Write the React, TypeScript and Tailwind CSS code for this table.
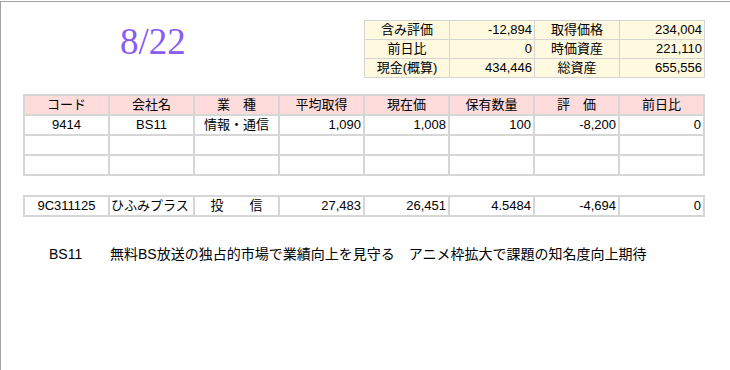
const font = '[font-family:"Liberation_Sans","Noto_Sans_CJK_JP",sans-serif]';

const summary = [
  ['含み評価', '-12,894', '取得価格', '234,004'],
  ['前日比', '0', '時価資産', '221,110'],
  ['現金(概算)', '434,446', '総資産', '655,556'],
];

const headers = ['コード', '会社名', '業　種', '平均取得', '現在価', '保有数量', '評　価', '前日比'];

type Cell = { t: string; a?: 'c' | 'r' | 'l' };

const rows: Cell[][] = [
  [
    { t: '9414', a: 'c' },
    { t: 'BS11', a: 'c' },
    { t: '情報・通信', a: 'c' },
    { t: '1,090' },
    { t: '1,008' },
    { t: '100' },
    { t: '-8,200' },
    { t: '0' },
  ],
  Array.from({ length: 8 }, () => ({ t: '' })),
  Array.from({ length: 8 }, () => ({ t: '' })),
];

const fund: Cell[] = [
  { t: '9C311125', a: 'c' },
  { t: 'ひふみプラス', a: 'l' },
  { t: '投　　信', a: 'c' },
  { t: '27,483' },
  { t: '26,451' },
  { t: '4.5484' },
  { t: '-4,694' },
  { t: '0' },
];

const align = (a?: string) =>
  a === 'c' ? 'justify-center' : a === 'l' ? 'justify-start pl-[1px]' : 'justify-end pr-[2px]';

function DataRow({ cells }: { cells: Cell[] }) {
  return (
    <>
      {cells.map((c, i) => (
        <div key={i} className={`h-[18px] bg-white flex items-center text-[13px] text-black ${align(c.a)}`}>
          {c.t}
        </div>
      ))}
    </>
  );
}

export default function App() {
  return (
    <div className={`w-[730px] h-[370px] bg-white ${font}`}>
      <div className="mt-px h-[369px] border-t border-l border-[#a3a3a3]">
        {/* 上段: 日付と資産サマリー */}
        <div className="flex items-start h-[92px]">
          <div className="w-[363px] pt-[18px] pl-[119px]">
            <span className="text-[37px] leading-[44px] text-[#8a5cf5] [font-family:'Liberation_Serif',serif]">
              8/22
            </span>
          </div>
          <div className="mt-[18px] grid grid-cols-[repeat(4,84px)] gap-px bg-[#d4d4d4] p-px">
            {summary.map((r, i) =>
              r.map((v, j) => (
                <div
                  key={`${i}-${j}`}
                  className={`h-[18px] bg-[#fff9df] flex items-center text-[13px] text-black ${
                    j % 2 === 0 ? 'justify-center' : 'justify-end pr-[2px]'
                  }`}
                >
                  {v}
                </div>
              ))
            )}
          </div>
        </div>

        {/* 保有株テーブル */}
        <div className="ml-[22px] w-fit grid grid-cols-[repeat(8,83px)] gap-[2px] bg-[#d6d6d6] p-[2px]">
          {headers.map((h) => (
            <div key={h} className="h-[18px] bg-[#ffdcdc] flex items-center justify-center text-[13px] text-black">
              {h}
            </div>
          ))}
          {rows.map((r, i) => (
            <DataRow key={i} cells={r} />
          ))}
        </div>

        {/* 投信 */}
        <div className="mt-[19px] ml-[22px] w-fit grid grid-cols-[repeat(8,83px)] gap-[2px] bg-[#d6d6d6] p-[2px]">
          <DataRow cells={fund} />
        </div>

        {/* メモ */}
        <div className="mt-[28px] flex text-[14px] text-black leading-[18px]">
          <span className="pl-[48px] w-[109px]">BS11</span>
          <span>無料BS放送の独占的市場で業績向上を見守る　アニメ枠拡大で課題の知名度向上期待</span>
        </div>
      </div>
    </div>
  );
}
